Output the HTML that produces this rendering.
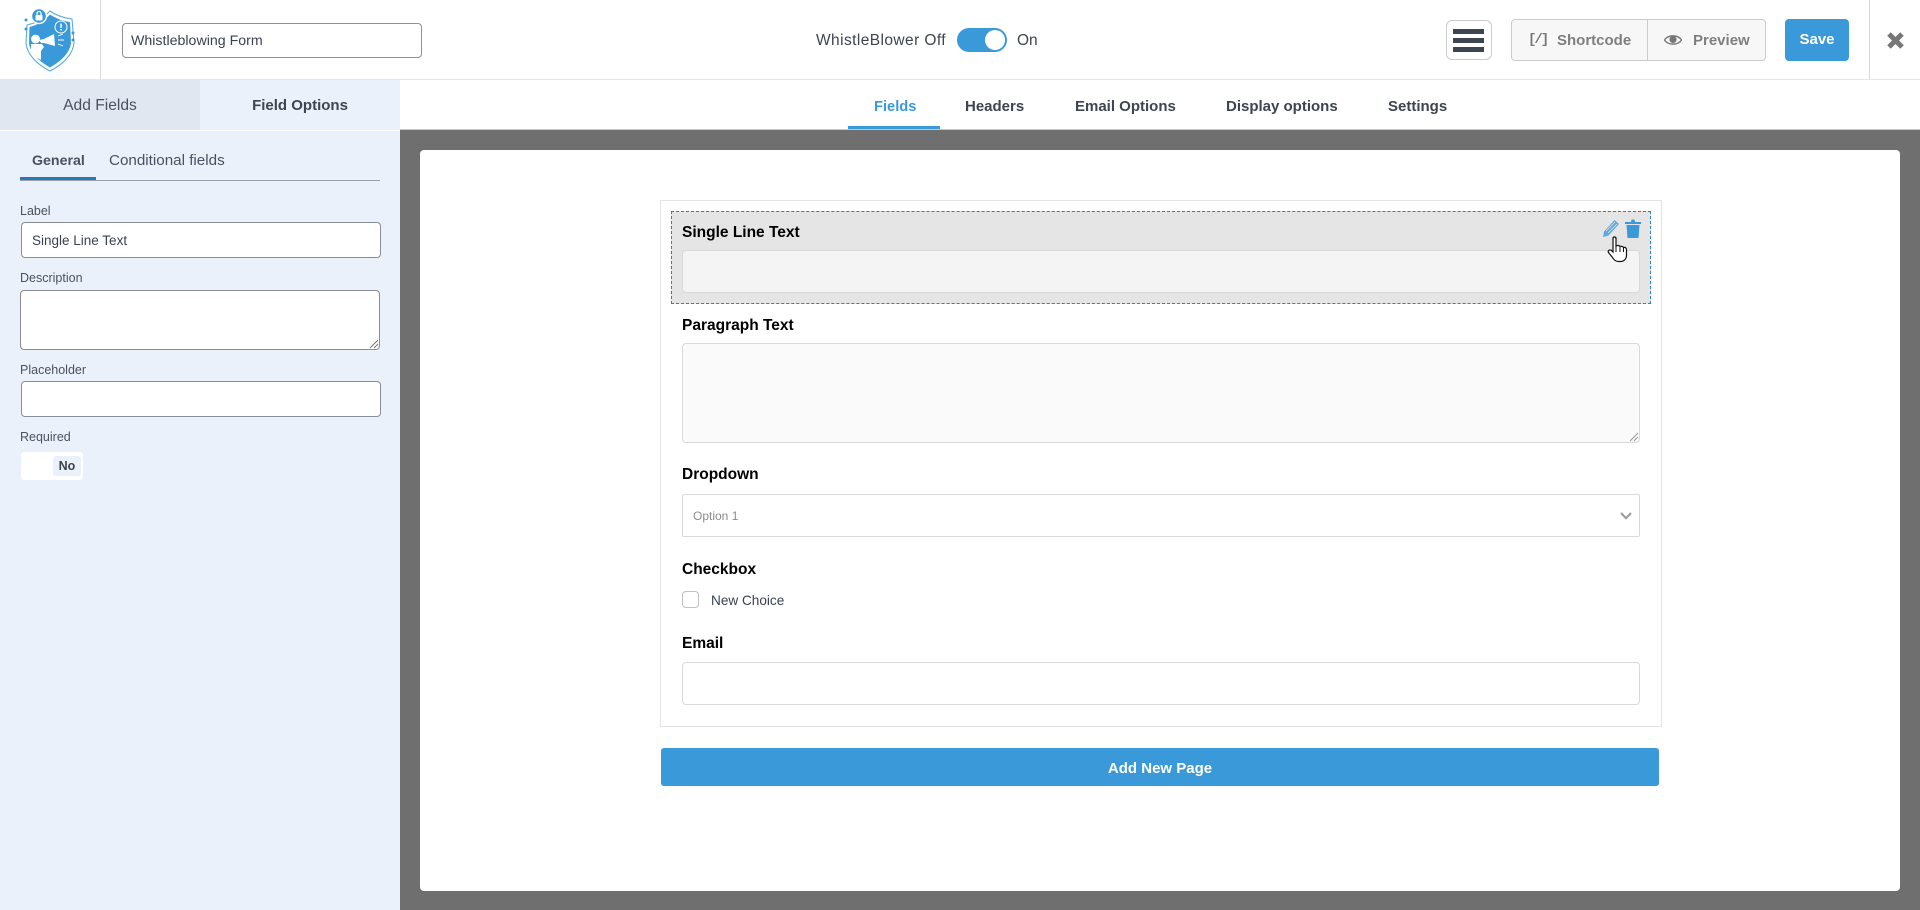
<!DOCTYPE html>
<html lang="en"><head><meta charset="utf-8"><title>Whistleblowing Form</title>
<style>
html,body{margin:0;padding:0;width:1920px;height:910px;overflow:hidden;background:#fff;font-family:"Liberation Sans",sans-serif;color:#3d4550}
.a{position:absolute;box-sizing:border-box}
.t{position:absolute;white-space:nowrap;line-height:20px;height:20px}
.b{font-weight:bold}
.fl{color:#000;font-weight:bold;font-size:15.5px;left:682px}
.in{border:1px solid #d9d9d9;border-radius:4px;left:682px;width:958px}
.sl{font-size:12.5px;color:#4a5260;left:20px}
.si{border:1px solid #8a8d93;border-radius:4px;background:#fff}
.tab{font-size:15px;color:#3d4550;font-weight:bold;top:97px}
</style></head><body>

<!-- header -->
<div class="a" style="left:0;top:79px;width:1920px;height:1px;background:#e6e6e6"></div>
<div class="a" style="left:100px;top:0;width:1px;height:79px;background:#d8d8d8"></div>
<div class="a" style="left:1869px;top:0;width:1px;height:79px;background:#d8d8d8"></div>

<svg class="a" style="left:20px;top:5px" width="60" height="70" viewBox="0 0 60 70">
<path d="M30 6 C37 11 44 13 52 14 L54 38 C53 50 42 60 30 66 C18 60 7 50 6 38 L7 20 L14 18 C20 15 25 11 30 6Z" fill="none" stroke="#5aabe0" stroke-width="1.1"/>
<path d="M30 9.5 C37 14 43 16 50 17 L51 38 C50 48 40 57 30 62.5 C20 57 10 48 9 38 L9.5 22 C18 20 25 15 30 9.5Z" fill="#3a9ad9"/>
<circle cx="19" cy="11" r="7.5" fill="#3a9ad9" stroke="#fff" stroke-width="1.4"/>
<rect x="15.5" y="10" width="7" height="5.5" rx="1" fill="#fff"/>
<path d="M17 10 V8.5 a2 2 0 0 1 4 0 V10" fill="none" stroke="#fff" stroke-width="1.2"/>
<circle cx="41" cy="22" r="6" fill="none" stroke="#fff" stroke-width="1"/>
<rect x="40.3" y="18.5" width="1.5" height="4.5" fill="#fff"/><rect x="40.3" y="24" width="1.5" height="1.5" fill="#fff"/>
<circle cx="15.5" cy="34" r="4.4" fill="#fff"/>
<path d="M11 39 L22 39 L24 42 L21 46 L21 55 C17 53 14 51 11 47Z" fill="#fff"/>
<path d="M19 35 L24 34 L34 29 L35 41 L24 38 L21 38Z" fill="#fff"/>
<path d="M38 31 L43 29 M38 35 H44 M38 39 L43 41" stroke="#fff" stroke-width=".9"/>
<circle cx="6" cy="15" r="1.5" fill="#3a9ad9"/><circle cx="6" cy="24" r="1.5" fill="#3a9ad9"/><circle cx="53" cy="28" r="1.5" fill="#3a9ad9"/><circle cx="53" cy="35" r="1.5" fill="#3a9ad9"/>
</svg>

<div class="a" style="left:122px;top:23px;width:300px;height:35px;border:1px solid #8f9196;border-radius:4px"></div>
<div class="t" style="left:131px;top:31px;font-size:14.2px;color:#3a4250">Whistleblowing Form</div>

<div class="t" style="left:816px;top:31px;font-size:15.5px;letter-spacing:.42px;color:#3d4550">WhistleBlower Off</div>
<div class="a" style="left:957px;top:28px;width:50px;height:24px;border-radius:12px;background:#3a9ad9"></div>
<div class="a" style="left:985px;top:30px;width:20px;height:20px;border-radius:50%;background:#fff"></div>
<div class="t" style="left:1017px;top:31px;font-size:15.5px;color:#3d4550">On</div>

<div class="a" style="left:1446px;top:20px;width:46px;height:40px;border:1px solid #ccc;border-radius:6px;background:#fff"></div>
<div class="a" style="left:1453px;top:29px;width:31px;height:4.5px;background:#3d4550"></div>
<div class="a" style="left:1453px;top:38px;width:31px;height:4.5px;background:#3d4550"></div>
<div class="a" style="left:1453px;top:47px;width:31px;height:4.5px;background:#3d4550"></div>

<div class="a" style="left:1511px;top:19px;width:255px;height:42px;border:1px solid #ccc;border-radius:4px;background:#f7f7f7"></div>
<div class="a" style="left:1647px;top:19px;width:1px;height:42px;background:#ccc"></div>
<div class="t b" style="left:1528px;top:30px;font-size:14px;color:#777;font-family:'Liberation Mono',monospace;letter-spacing:-2px">[/]</div>
<div class="t b" style="left:1557px;top:31px;font-size:15px;color:#7f7f7f">Shortcode</div>
<svg class="a" style="left:1664px;top:33px" width="18" height="14" viewBox="0 0 18 14"><path d="M0.5 7 C4 1.5 14 1.5 17.5 7 C14 12.5 4 12.5 0.5 7Z" fill="none" stroke="#777" stroke-width="1.4"/><circle cx="9" cy="6.5" r="3.6" fill="#777"/></svg>
<div class="t b" style="left:1693px;top:31px;font-size:15px;color:#7f7f7f">Preview</div>
<div class="a" style="left:1785px;top:19px;width:64px;height:42px;border-radius:4px;background:#3a9ad9"></div>
<div class="t b" style="left:1785px;width:64px;text-align:center;top:30px;font-size:15px;color:#fff">Save</div>
<svg class="a" style="left:1886px;top:31px" width="19" height="19" viewBox="0 0 19 19"><path d="M3 3 L16 16 M16 3 L3 16" stroke="#777" stroke-width="5"/></svg>

<!-- nav tabs -->
<div class="t tab" style="left:874px;color:#3a9ad9;font-size:14.7px">Fields</div>
<div class="a" style="left:848px;top:126px;width:92px;height:3px;background:#3a9ad9"></div>
<div class="t tab" style="left:965px">Headers</div>
<div class="t tab" style="left:1075px">Email Options</div>
<div class="t tab" style="left:1226px">Display options</div>
<div class="t tab" style="left:1388px">Settings</div>

<!-- left panel -->
<div class="a" style="left:0;top:80px;width:200px;height:50px;background:#e1e7f0"></div>
<div class="a" style="left:200px;top:80px;width:200px;height:50px;background:#eaf1fb"></div>
<div class="a" style="left:0;top:130px;width:400px;height:780px;background:#eaf1fb;border-top:1px solid #fff"></div>
<div class="t" style="left:0;width:200px;text-align:center;top:96px;font-size:15.6px;color:#4a5260">Add Fields</div>
<div class="t b" style="left:200px;width:200px;text-align:center;top:96px;font-size:15px;color:#3d4550">Field Options</div>
<div class="t b" style="left:32px;top:151px;font-size:14.2px;color:#4a5260">General</div>
<div class="t" style="left:109px;top:151px;font-size:15.2px;color:#4a5260">Conditional fields</div>
<div class="a" style="left:20px;top:180px;width:360px;height:1px;background:#9aa0aa"></div>
<div class="a" style="left:20px;top:177px;width:76px;height:3px;background:#2a78b5"></div>

<div class="t sl" style="top:201px">Label</div>
<div class="a si" style="left:21px;top:222px;width:360px;height:36px"></div>
<div class="t" style="left:32px;top:231px;font-size:13.5px;color:#3a4250">Single Line Text</div>
<div class="t sl" style="top:268px">Description</div>
<div class="a si" style="left:20px;top:290px;width:360px;height:60px"></div>
<svg class="a" style="left:369px;top:339px" width="10" height="10"><path d="M1 9 L9 1 M5 9 L9 5" stroke="#777" stroke-width="1"/></svg>
<div class="t sl" style="top:360px">Placeholder</div>
<div class="a si" style="left:21px;top:381px;width:360px;height:36px"></div>
<div class="t sl" style="top:427px">Required</div>
<div class="a" style="left:21px;top:452px;width:62px;height:28px;background:#fff;border-radius:3px"></div>
<div class="a" style="left:53px;top:456px;width:28px;height:20px;background:#eaf1fb;border-radius:3px"></div>
<div class="t b" style="left:53px;width:28px;text-align:center;top:456px;font-size:12.5px;color:#3d4550">No</div>

<!-- main -->
<div class="a" style="left:400px;top:130px;width:1520px;height:780px;background:#6f6f6f"></div>
<div class="a" style="left:400px;top:129px;width:1520px;height:1px;background:#c8c8c8"></div>
<div class="a" style="left:420px;top:150px;width:1480px;height:741px;background:#fff;border-radius:4px"></div>

<div class="a" style="left:660px;top:200px;width:1002px;height:527px;border:1px solid #e4e4e4"></div>
<div class="a" style="left:671px;top:211px;width:980px;height:93px;background:#e6e5e6;border:1px dashed #2a82c0"></div>
<div class="t fl" style="top:223px">Single Line Text</div>
<div class="a in" style="top:250px;height:43px;background:#f4f4f4"></div>
<svg class="a" style="left:1602px;top:219px" width="18" height="19" viewBox="0 0 18 19"><path d="M12.5 1 L17 5 L6.5 16.5 L1 18 L2 12.5Z" fill="#58a9e0"/><path d="M4 12 L13 3 M6 14 L15 5" stroke="#e6e5e6" stroke-width="0.8"/></svg>
<svg class="a" style="left:1625px;top:218px" width="16" height="21" viewBox="0 0 16 21"><path d="M0 4 H6 L6.5 1.5 H9.5 L10 4 H16 V6 H0Z" fill="#3a9ad9"/><path d="M1.5 7 H14.5 L13.5 20 H2.5Z" fill="#3a9ad9"/></svg>
<svg class="a" style="left:1607px;top:236px" width="21" height="27" viewBox="0 0 21 27"><path d="M6 2.5 C6 .5 9 .5 9 2.5 V10 C11 9 12.5 9.5 13 10.5 C15 10 16 10.5 16.5 11.5 C18.5 11 19.5 12 19.5 14 V19 C19.5 23 17 25.5 13.5 25.5 H11.5 C8.5 25.5 7 24 5.5 21.5 L1.5 16.5 C.5 15 2.5 13 4.5 14.5 L6 16Z" fill="#fff" stroke="#111" stroke-width="1.2"/><path d="M9 10 V16 M13 10.5 V16 M16.5 11.5 V16" stroke="#111" stroke-width="1"/></svg>

<div class="t fl" style="top:316px">Paragraph Text</div>
<div class="a in" style="top:343px;height:100px;background:#fafafa"></div>
<svg class="a" style="left:1629px;top:432px" width="10" height="10"><path d="M1 9 L9 1 M5 9 L9 5" stroke="#999" stroke-width="1"/></svg>

<div class="t fl" style="top:465px">Dropdown</div>
<div class="a in" style="top:494px;height:43px;background:#fff;border-radius:2px"></div>
<div class="t" style="left:693px;top:506px;font-size:12px;color:#8a8a8a">Option 1</div>
<svg class="a" style="left:1620px;top:512px" width="12" height="8"><path d="M1 1 L6 6.2 L11 1" fill="none" stroke="#9a9a9a" stroke-width="2"/></svg>

<div class="t fl" style="top:560px">Checkbox</div>
<div class="a" style="left:682px;top:591px;width:17px;height:17px;border:1px solid #c0c0c0;border-radius:4px;background:#fff"></div>
<div class="t" style="left:711px;top:591px;font-size:13.6px;color:#3a4250">New Choice</div>

<div class="t fl" style="top:634px">Email</div>
<div class="a in" style="top:662px;height:43px;background:#fff"></div>

<div class="a" style="left:661px;top:748px;width:998px;height:38px;background:#3a9ad9;border-radius:3px"></div>
<div class="t b" style="left:661px;width:998px;text-align:center;top:759px;font-size:15px;color:#fff">Add New Page</div>

</body></html>
